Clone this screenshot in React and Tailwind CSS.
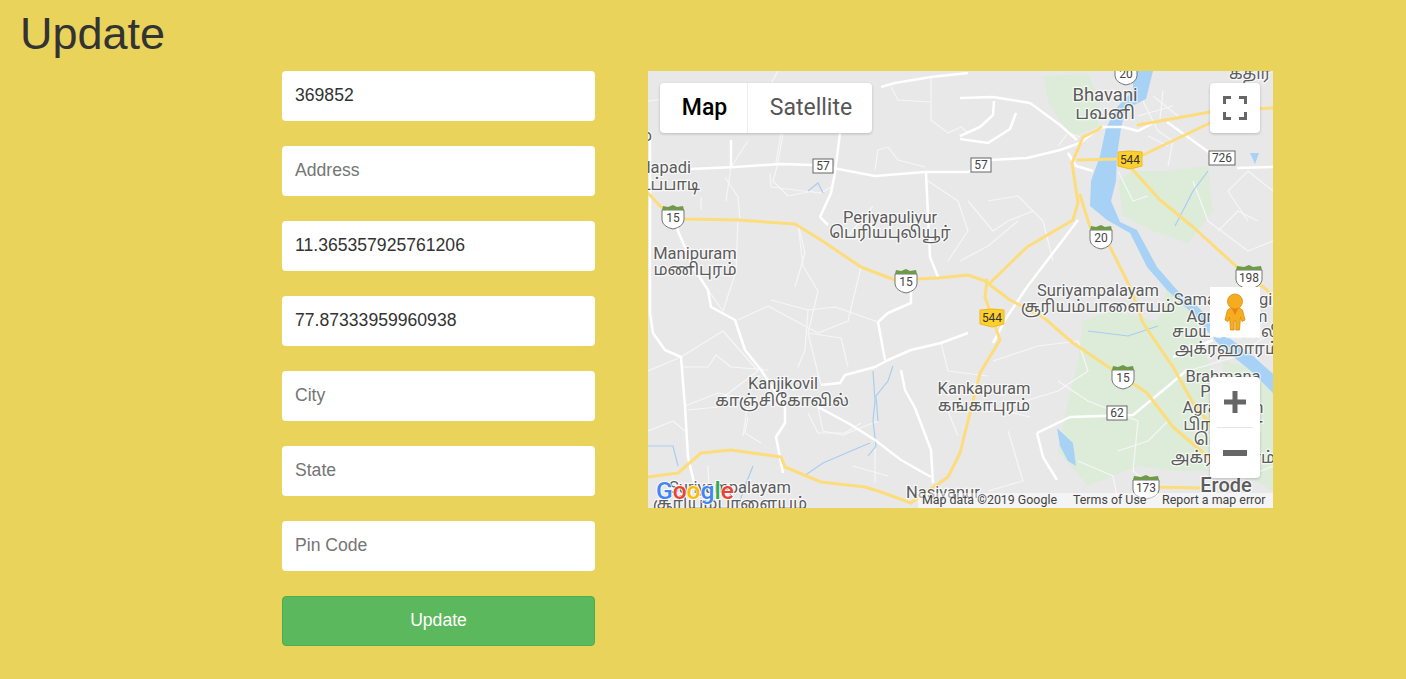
const fields = [
  { value: '369852', placeholder: 'Latitude' },
  { value: '', placeholder: 'Address' },
  { value: '11.365357925761206', placeholder: 'Latitude' },
  { value: '77.87333959960938', placeholder: 'Longitude' },
  { value: '', placeholder: 'City' },
  { value: '', placeholder: 'State' },
  { value: '', placeholder: 'Pin Code' },
];

const YELLOW_ROADS = [
  '0,122 13,136 37,148 90,149 147,153 173,169 213,196 247,209 290,207 320,204 337,210',
  '342,212 379,176 425,149 430,132 424,92 435,66 450,59 453,56',
  '430,89 469,88 495,84 562,52',
  '490,54 562,41 625,37',
  '485,99 512,129 545,156 589,196 619,219 625,226',
  '432,124 442,156 462,176 482,216 495,252 525,296 545,332 559,349 565,360',
  '337,210 362,229 395,246 425,272 465,299 499,322 525,356 552,379 560,386',
  '339,209 337,226 352,269 332,302 312,382 300,406 263,432',
  '0,406 30,402 53,382 83,379 133,386 137,396 173,411 217,416 233,421 263,432',
  '505,416 552,417',
];

const WHITE_ROADS = [
  '43,98 87,96 133,93 165,94 185,97 227,105 277,101 320,101 342,89 379,87 412,79 432,72',
  '312,27 345,26 382,32 412,54 429,69',
  '589,97 625,96',
  '519,51 562,82',
  '2,62 2,122',
  '2,122 2,242 5,262 17,279 33,286 37,336 40,386 47,416',
  '28,152 30,160 47,199 60,219 63,236 87,249 97,279 113,299 137,336 137,352 128,366 133,392 135,402',
  '170,336 200,352 227,369 253,389 283,406',
  '173,314 192,312 197,304 227,296 240,289 263,279 293,272 320,262',
  '230,251 240,242 263,232 263,219',
  '230,251 237,289',
  '253,299 257,319 267,337 283,379 285,412',
  '192,62 187,102 183,122 172,146 180,154',
  '278,102 282,186 290,206',
  '83,69 83,96',
  '233,16 247,12 283,6 320,2',
  '430,149 379,216 359,246 345,272',
  '389,362 422,346 485,344 519,316 539,299',
  '389,362 395,386 409,409',
  '525,286 565,269',
  '312,65 332,56 345,44 346,30',
  '312,68 340,72 362,58 368,42',
  '432,72 445,62 455,56 475,56 490,60 505,52',
  '420,82 428,95 445,100',
];

const THIN_ROADS = [
  '100,70 83,96 78,130',
  '130,0 118,22 100,36',
  '0,30 50,24 105,18',
  '135,63 130,92 125,110 140,125 165,120',
  '90,149 88,200 75,240 60,219',
  '150,153 155,195 170,220 160,262 173,314',
  '213,196 200,250 170,262 120,235 90,249',
  '280,110 310,130 320,160 300,190',
  '320,130 345,160 360,150 385,140',
  '225,135 200,165',
  '0,300 33,286 75,260 110,300 70,330',
  '37,335 70,322 137,336',
  '100,330 95,365',
  '170,336 175,360 195,364 230,350',
  '293,272 300,300 340,305',
  '300,340 310,365',
  '345,290 390,275 430,270 440,300 410,320 345,340',
  '360,360 375,410 340,420',
  '410,310 440,330 490,350 485,400 510,420',
  '520,350 500,370 470,380',
  '600,150 580,120 600,100 625,120',
  '545,110 560,150 600,180 625,170',
  '340,130 370,125 395,150 405,190',
  '312,190 340,175 370,150',
  '540,300 590,285 625,260',
  '590,410 625,395',
  '470,100 485,130 500,125',
  '510,60 525,70 520,95',
  '283,6 283,49 300,62 313,56 320,62',
  '243,16 250,29 282,31',
  '227,99 230,79 240,76 250,89 277,96',
  '133,62 128,92',
  '122,102 123,116 147,119 173,122 183,116',
  '77,106 90,126 92,149',
  '53,126 53,139',
  '150,153 157,182 147,216',
  '160,239 157,279 150,296',
  '160,262 193,267 200,296',
  '123,229 160,239 187,236 230,251',
  '33,296 60,296 68,284 83,296 120,299',
  '40,339 70,336',
  '100,346 97,362 113,372',
  '160,342 170,362 197,362 213,352',
  '227,376 227,412',
  '339,336 382,346',
  '495,30 510,60',
  '505,25 530,45',
  '490,45 525,35',
  '500,65 520,75',
  '515,20 512,48',
  '410,75 420,62 432,66',
  '0,360 25,350 37,360',
  '60,395 62,437',
  '205,395 240,405',
  '430,390 465,405 470,430',
  '570,160 590,140 610,150',
];

const STREAMS = [
  '230,350 228,325 240,310 245,295',
  '225,300 227,330 225,350 228,375 220,385',
  '156,405 175,392 210,377 222,372',
  '0,375 25,375 30,395',
  '105,395 95,420 90,437',
  '440,260 480,265 510,255',
  '180,335 200,330',
  '160,120 170,112 175,122',
  '527,155 545,120 560,100',
];

const RIVER =
  '505,0 498,28 478,38 473,57 469,85 468,110 463,130 472,151 489,159 509,196 529,219 548,234 575,262 605,285 625,303 625,322 603,300 572,275 545,243 519,219 499,196 482,162 459,149 442,135 443,110 452,85 458,57 470,35 485,20 485,0';

const GREEN_PATCHES = [
  '395,5 440,3 452,30 450,56 425,65 412,50 400,30',
  '470,110 485,100 520,100 560,95 565,140 540,172 505,160 475,145',
  '435,250 465,240 510,250 520,215 545,240 560,290 590,340 600,390 570,400 530,400 490,395 440,415 410,380 420,330 430,290',
  '560,20 600,10 612,15 612,30 570,40',
  '575,290 625,300 625,420 575,390',
];

function Shield({ x, y, label }) {
  const w = label.length > 2 ? 13 : 11;
  return (
    <g>
      <path
        d={`M${x - w} ${y - 7} L${x + w} ${y - 7} L${x + w} ${y + 3} Q${x + w - 1} ${y + 10} ${x} ${y + 12} Q${x - w + 1} ${y + 10} ${x - w} ${y + 3} Z`}
        fill="#fff"
        stroke="#777"
        strokeWidth="1"
      />
      <path d={`M${x - w} ${y - 7} L${x + w} ${y - 7} L${x + w - 1} ${y - 11} L${x + 4} ${y - 10} L${x} ${y - 12} L${x - 5} ${y - 10} L${x - w + 1} ${y - 11} Z`} fill="#6f9a4a" />
      <text x={x} y={y + 5} textAnchor="middle" fontSize="12" fill="#444">{label}</text>
    </g>
  );
}

function Box({ x, y, label }) {
  const w = label.length > 2 ? 13 : 10;
  return (
    <g>
      <rect x={x - w} y={y - 7} width={w * 2} height="14" fill="#fff" stroke="#666" strokeWidth="1" />
      <text x={x} y={y + 4} textAnchor="middle" fontSize="12" fill="#444">{label}</text>
    </g>
  );
}

function Badge({ x, y }) {
  return (
    <g>
      <path d={`M${x - 12} ${y - 8} Q${x} ${y - 10} ${x + 12} ${y - 8} L${x + 12} ${y + 6} L${x} ${y + 9} L${x - 12} ${y + 6} Z`} fill="#fdd02f" stroke="#eeb91f" strokeWidth="1" strokeLinejoin="round" />
      <text x={x} y={y + 4} textAnchor="middle" fontSize="12" fill="#333">544</text>
    </g>
  );
}

function Label({ x, y, children, anchor = 'middle', size = 16.5, weight = 400 }) {
  return (
    <text
      x={x}
      y={y}
      textAnchor={anchor}
      fontSize={size}
      fontWeight={weight}
      fill="#5c5c5c"
      stroke="#ffffff"
      strokeOpacity="0.7"
      strokeWidth="2.5"
      paintOrder="stroke"
    >
      {children}
    </text>
  );
}

function MapCanvas() {
  return (
    <svg viewBox="0 0 625 437" className="block w-full h-full" style={{ fontFamily: 'Roboto, "Noto Sans", "Noto Sans Tamil", sans-serif' }}>
      <rect width="625" height="437" fill="#e8e8e8" />
      {GREEN_PATCHES.map((p) => <polygon key={p} points={p} fill="#dcecd9" />)}
      {THIN_ROADS.map((p) => <polyline key={p} points={p} fill="none" stroke="#f6f6f6" strokeWidth="1.2" strokeLinejoin="round" />)}
      {STREAMS.map((p) => <polyline key={p} points={p} fill="none" stroke="#a9cdf0" strokeWidth="1.2" />)}
      <polygon points={RIVER} fill="#a8d2f5" />
      <polygon points="409,357 425,372 428,395 420,390 412,375" fill="#a8d2f5" />
      <polygon points="602,82 611,82 607,93" fill="#a8d2f5" />
      {WHITE_ROADS.map((p) => <polyline key={p} points={p} fill="none" stroke="#ffffff" strokeWidth="2.5" strokeLinejoin="round" />)}
      {YELLOW_ROADS.map((p) => <polyline key={p} points={p} fill="none" stroke="#fddc7c" strokeWidth="3" strokeLinejoin="round" strokeLinecap="round" />)}

      <Label x={457} y={30} size={18.5}>Bhavani</Label>
      <Label x={457} y={48} size={18}>பவனி</Label>
      <Label x={242} y={152}>Periyapuliyur</Label>
      <Label x={242} y={167}>பெரியபுலியூர்</Label>
      <Label x={-3} y={70}>ம</Label>
      <Label x={43} y={102} anchor="end">Edapadi</Label>
      <Label x={52} y={119} anchor="end">எடப்பாடி</Label>
      <Label x={47} y={188}>Manipuram</Label>
      <Label x={47} y={204}>மணிபுரம்</Label>
      <Label x={135} y={318}>Kanjikovil</Label>
      <Label x={134} y={335}>காஞ்சிகோவில்</Label>
      <Label x={336} y={323}>Kankapuram</Label>
      <Label x={336} y={340}>கங்காபுரம்</Label>
      <Label x={450} y={225}>Suriyampalayam</Label>
      <Label x={450} y={241}>சூரியம்பாளையம்</Label>
      <Label x={579} y={234}>Samayasangili</Label>
      <Label x={579} y={251}>Agraharam</Label>
      <Label x={579} y={266}>சமயசங்கிலி</Label>
      <Label x={579} y={283}>அக்ரஹாரம்</Label>
      <Label x={575} y={311}>Brahmana</Label>
      <Label x={575} y={326}>Periya</Label>
      <Label x={575} y={342}>Agraharam</Label>
      <Label x={575} y={359}>பிராமண</Label>
      <Label x={575} y={374}>பெரிய</Label>
      <Label x={575} y={392}>அக்ரஹாரம்</Label>
      <Label x={578} y={421} size={20} weight={500}>Erode</Label>
      <Label x={258} y={427} anchor="start">Nasiyanur</Label>
      <Label x={82} y={422}>Suriyampalayam</Label>
      <Label x={82} y={438}>சூரியம்பாளையம்</Label>
      <Label x={602} y={8}>கதிர</Label>

      <Shield x={25} y={146} label="15" />
      <Shield x={258} y={210} label="15" />
      <Shield x={453} y={166} label="20" />
      <Shield x={601} y={206} label="198" />
      <Shield x={475} y={306} label="15" />
      <Shield x={498} y={416} label="173" />
      <Shield x={478} y={2} label="20" />
      <Badge x={482} y={89} />
      <Badge x={344} y={247} />
      <Box x={175} y={95} label="57" />
      <Box x={333} y={94} label="57" />
      <Box x={574} y={87} label="726" />
      <Box x={469} y={342} label="62" />

      <text x={8} y={428} fontSize="24.5" fontWeight="500" stroke="#ffffff" strokeOpacity="0.85" strokeWidth="2" paintOrder="stroke">
        <tspan fill="#4285f4">G</tspan>
        <tspan fill="#ea4335">o</tspan>
        <tspan fill="#fbbc05">o</tspan>
        <tspan fill="#4285f4">g</tspan>
        <tspan fill="#34a853">l</tspan>
        <tspan fill="#ea4335">e</tspan>
      </text>
    </svg>
  );
}

function MapBox() {
  return (
    <div className="relative w-[625px] h-[437px] overflow-hidden font-['Roboto',sans-serif]">
      <MapCanvas />

      {/* map type */}
      <div className="absolute left-3 top-3 flex h-[50px] w-[212px] bg-white rounded-sm shadow-[0_1px_3px_rgba(0,0,0,0.2)]">
        <div className="flex w-[88px] items-center justify-center border-r border-[#eeeeee] pl-[2px] text-[23px] font-medium text-black">Map</div>
        <div className="flex flex-1 items-center justify-center pl-[2px] text-[23px] text-[#565656]">Satellite</div>
      </div>

      {/* fullscreen */}
      <div className="absolute left-[562px] top-3 flex h-[50px] w-[50px] items-center justify-center bg-white rounded-sm shadow-[0_1px_3px_rgba(0,0,0,0.2)]">
        <svg width="24" height="24" viewBox="0 0 24 24" fill="none" stroke="#666" strokeWidth="3">
          <path d="M1.5 8V1.5H8M16 1.5H22.5V8M22.5 16V22.5H16M8 22.5H1.5V16" />
        </svg>
      </div>

      {/* pegman */}
      <div className="absolute left-[562px] top-[216px] flex h-[50px] w-[50px] items-center justify-center bg-white">
        <svg width="24" height="38" viewBox="0 0 24 38" fill="#f5ad1f" stroke="#d98c0a" strokeWidth="0.8" strokeLinejoin="round">
          <path d="M7.5 15L4.5 17L2 27L5 28.5L6.5 24L7.5 37H11.2V28H12.8V37H16.5L17.5 24L19 28.5L22 27L19.5 17L16.5 15Z" />
          <circle cx="12" cy="8.5" r="7.5" />
          <path d="M9 16L12 22L15 16" fill="#e8851a" stroke="none" />
        </svg>
      </div>

      {/* zoom */}
      <div className="absolute left-[562px] top-[306px] flex h-[101px] w-[50px] flex-col items-center bg-white rounded-sm shadow-[0_1px_3px_rgba(0,0,0,0.2)]">
        <div className="flex h-[50px] w-full items-center justify-center">
          <svg width="24" height="24" viewBox="0 0 24 24" fill="#666">
            <path d="M9.5 1H14.5V9.5H23V14.5H14.5V23H9.5V14.5H1V9.5H9.5Z" />
          </svg>
        </div>
        <div className="h-px w-[36px] bg-[#e6e6e6]" />
        <div className="flex h-[50px] w-full items-center justify-center">
          <div className="h-[6px] w-[24px] bg-[#666666]" />
        </div>
      </div>

      {/* attribution */}
      <div className="absolute bottom-0 right-0 flex h-[15px] w-[355px] items-center bg-white/50 pl-[4px] text-[12.4px] leading-none text-[#444444]">
        <span className="w-[151px] whitespace-nowrap">Map data ©2019 Google</span>
        <span className="w-[89px] whitespace-nowrap">Terms of Use</span>
        <span className="whitespace-nowrap">Report a map error</span>
      </div>
    </div>
  );
}

export default function App() {
  return (
    <div className="min-h-[679px] bg-[#e9d35b] font-['Liberation_Sans',Arial,sans-serif] text-[#333333]">
      <h1 className="h-[71px] pl-5 pt-[8px] text-[45px] leading-[52px] font-normal">Update</h1>
      <div className="flex items-start pl-[282px] gap-[53px]">
        <form className="flex w-[313px] flex-col gap-[25px]">
          {fields.map((field, i) => (
            <input
              key={i}
              type="text"
              defaultValue={field.value}
              placeholder={field.placeholder}
              className="h-[50px] w-full rounded-sm bg-white px-[13px] pb-[2px] text-[17.6px] text-[#333333] outline-none placeholder:text-[#757575]"
            />
          ))}
          <button type="button" className="h-[50px] w-full rounded border border-[#4cae4c] bg-[#5cb85c] pb-[2px] text-[17.6px] text-white">
            Update
          </button>
        </form>
        <MapBox />
      </div>
    </div>
  );
}
